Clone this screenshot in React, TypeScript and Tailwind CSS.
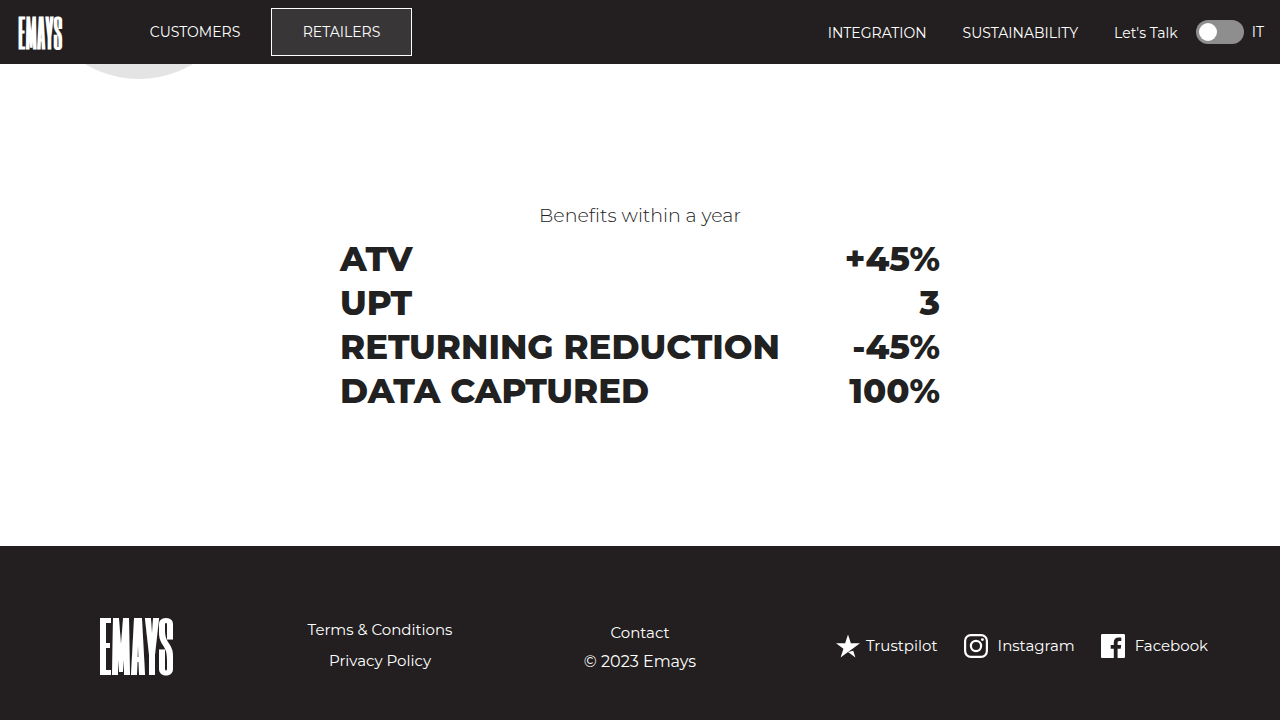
import type { ReactNode } from "react";

const benefits = [
  { label: "ATV", value: "+45%" },
  { label: "UPT", value: "3" },
  { label: "RETURNING REDUCTION", value: "-45%" },
  { label: "DATA CAPTURED", value: "100%" },
];

function TrustpilotIcon() {
  return (
    <svg viewBox="0 0 24 24" className="size-6" fill="currentColor" aria-hidden="true">
      <path d="M17.227 16.67l2.19 6.742-7.413-5.388 5.223-1.354zM24 9.31h-9.165L12.005.589l-2.84 8.723L0 9.3l7.422 5.397-2.84 8.714 7.422-5.388 4.583-3.326L24 9.311z" />
    </svg>
  );
}

function InstagramIcon() {
  return (
    <svg viewBox="0 0 24 24" className="size-6" fill="none" stroke="currentColor" aria-hidden="true">
      <rect x="1.1" y="1.1" width="21.8" height="21.8" rx="5.8" strokeWidth="2.2" />
      <circle cx="12" cy="12" r="5.1" strokeWidth="2.2" />
      <circle cx="18.4" cy="5.6" r="1.45" fill="currentColor" stroke="none" />
    </svg>
  );
}

function FacebookIcon() {
  return (
    <svg viewBox="0 0 24 24" className="size-6" fill="currentColor" aria-hidden="true">
      <path d="M22.7 0H1.3C.6 0 0 .6 0 1.3v21.4c0 .7.6 1.3 1.3 1.3h11.5v-9.3H9.7v-3.6h3.1V8.4c0-3.1 1.9-4.8 4.7-4.8 1.3 0 2.5.1 2.8.1V7h-1.9c-1.5 0-1.8.7-1.8 1.8v2.3h3.6l-.5 3.6h-3.1V24h6.1c.7 0 1.3-.6 1.3-1.3V1.3C24 .6 23.4 0 22.7 0z" />
    </svg>
  );
}

function SocialLink({ icon, label, gap }: { icon: ReactNode; label: string; gap: string }) {
  return (
    <a href="#" className={`flex items-center ${gap}`}>
      {icon}
      {label}
    </a>
  );
}

export default function App() {
  return (
    <div className="flex min-h-screen flex-col bg-white font-['Montserrat','Inter',sans-serif] text-[#212121]">
      <header className="sticky top-0 flex h-16 items-center justify-between bg-[#231f20] px-4 text-sm text-white">
        <div className="flex items-center">
          <a
            href="#"
            className="w-[103px] pl-0.5 font-['Six_Caps','League_Gothic','Bebas_Neue','Roboto_Condensed','Liberation_Sans_Narrow',sans-serif] text-[38px] leading-none font-bold"
          >
            EMAYS
          </a>
          <nav className="flex items-center">
            <a href="#" className="flex h-12 w-[152px] items-center justify-center">
              CUSTOMERS
            </a>
            <a
              href="#"
              aria-current="page"
              className="flex h-12 w-[141px] items-center justify-center border border-white bg-[#393637]"
            >
              RETAILERS
            </a>
          </nav>
        </div>
        <div className="flex items-center">
          <nav className="flex items-center gap-9 pt-0.5 pr-[18px]">
            <a href="#">INTEGRATION</a>
            <a href="#">SUSTAINABILITY</a>
            <a href="#">Let's Talk</a>
          </nav>
          <label className="flex items-center gap-2">
            <input
              type="checkbox"
              role="switch"
              className="flex h-6 w-12 appearance-none items-center rounded-full bg-[#8e8e8e] px-[3px] before:size-[18px] before:rounded-full before:bg-white checked:justify-end"
            />
            IT
          </label>
        </div>
      </header>

      <main className="flex-1 pb-[132px]">
        <div className="ml-[34px] flex h-[15px] w-[210px] flex-col justify-end overflow-hidden" aria-hidden="true">
          <div className="size-[210px] shrink-0 rounded-full bg-[#e4e4e4]" />
        </div>
        <section className="mx-auto max-w-[600px] pt-[123px]">
          <h2 className="text-center text-[19px] leading-7 font-light">Benefits within a year</h2>
          <table className="mt-[7px] w-full text-[34px] font-extrabold">
            <tbody>
              {benefits.map(({ label, value }) => (
                <tr key={label} className="h-11">
                  <th scope="row" className="p-0 text-left leading-[44px] font-extrabold">
                    {label}
                  </th>
                  <td className="p-0 text-right leading-[44px]">{value}</td>
                </tr>
              ))}
            </tbody>
          </table>
        </section>
      </main>

      <footer className="grid grid-cols-[272fr_216fr_304fr_460fr] items-center bg-[#231f20] pt-[72px] pr-7 pb-[46px] text-[15px] text-white">
        <a
          href="#"
          className="text-center font-['Six_Caps','League_Gothic','Bebas_Neue','Roboto_Condensed','Liberation_Sans_Narrow',sans-serif] text-[64px] leading-[52px] font-bold"
        >
          EMAYS
        </a>
        <nav className="flex flex-col items-center gap-2">
          <a href="#">Terms &amp; Conditions</a>
          <a href="#">Privacy Policy</a>
        </nav>
        <div className="flex flex-col items-center gap-1.5 pt-1">
          <a href="#">Contact</a>
          <p className="text-base">© 2023 Emays</p>
        </div>
        <nav className="flex items-center justify-center gap-[26px]">
          <SocialLink icon={<TrustpilotIcon />} label="Trustpilot" gap="gap-1.5" />
          <SocialLink icon={<InstagramIcon />} label="Instagram" gap="gap-2.5" />
          <SocialLink icon={<FacebookIcon />} label="Facebook" gap="gap-2.5" />
        </nav>
      </footer>
    </div>
  );
}
